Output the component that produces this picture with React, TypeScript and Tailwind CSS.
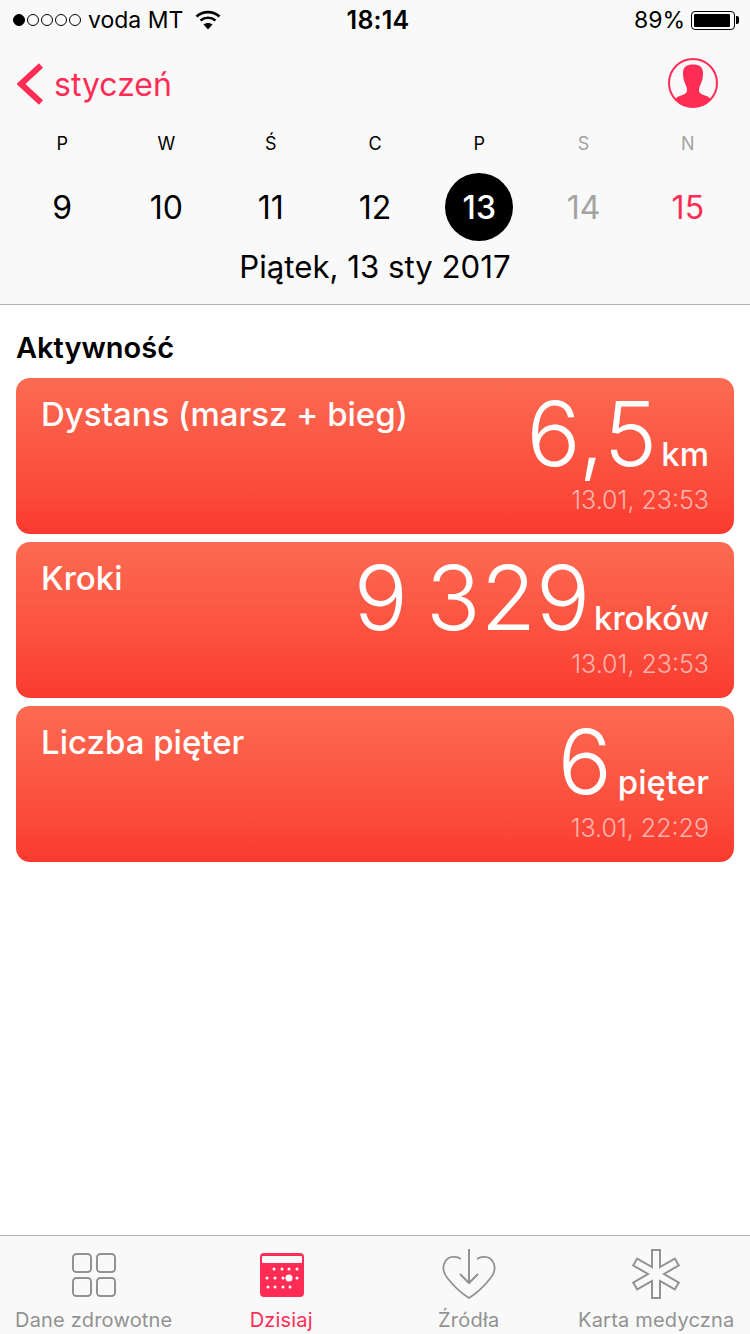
const days = [
  { label: "P", num: "9" },
  { label: "W", num: "10" },
  { label: "Ś", num: "11" },
  { label: "C", num: "12" },
  { label: "P", num: "13", active: true },
  { label: "S", num: "14", tone: "text-[#a3a3a3]", labelTone: "text-[#a3a3a3]" },
  { label: "N", num: "15", tone: "text-[#ff2d55]", labelTone: "text-[#a3a3a3]" },
]

const cards = [
  { title: "Dystans (marsz + bieg)", value: "6,5", unit: "km", time: "13.01, 23:53", valueClass: "tracking-[1px] mr-[-1px]" },
  { title: "Kroki", value: "9 329", unit: "kroków", time: "13.01, 23:53", valueClass: "[word-spacing:-7px]" },
  { title: "Liczba pięter", value: "6", unit: "pięter", time: "13.01, 22:29", valueClass: "mr-[2px]" },
]

const calendarDots = [
  { y: 16, xs: [14, 22, 29, 37] },
  { y: 25, xs: [7, 15, 23, 37] },
  { y: 34, xs: [8, 15, 23, 30] },
]

function StatusBar() {
  return (
    <div className="h-[40px] flex items-center justify-between pl-[13px] pr-[11px] text-[23px] leading-none text-black">
      <div className="flex items-center w-[304px]">
        <div className="flex gap-[2px]">
          <span className="w-[12px] h-[12px] rounded-full bg-black border border-black" />
          <span className="w-[12px] h-[12px] rounded-full border border-black" />
          <span className="w-[12px] h-[12px] rounded-full border border-black" />
          <span className="w-[12px] h-[12px] rounded-full border border-black" />
          <span className="w-[12px] h-[12px] rounded-full border border-black" />
        </div>
        <span className="ml-[7px]">voda MT</span>
        <svg className="ml-[12px]" width="26" height="20" viewBox="0 0 26 20" fill="none" stroke="#000" strokeWidth="2.6">
          <path d="M1.5 6.5C8 .7 18 .7 24.500 6.500" />
          <path d="M5.500 10.500C9.800 6.800 16.200 6.800 20.500 10.500" />
          <path d="M13 19.500L8.500 14.500C11 12.500 15 12.500 17.500 14.500Z" fill="#000" stroke="none" />
        </svg>
      </div>
      <span className="font-semibold text-[25px] tracking-[0.2px]">18:14</span>
      <div className="flex items-center justify-end w-[300px]">
        <span>89%</span>
        <div className="ml-[6px] w-[44px] h-[19px] border border-black rounded-[4px] p-[2px]">
          <div className="w-[36px] h-full bg-black rounded-[1px]" />
        </div>
        <div className="ml-[1px] w-[3px] h-[8px] bg-black rounded-r-[2px]" />
      </div>
    </div>
  )
}

function DaysHeader() {
  return (
    <div className="bg-[#f9f9f9] border-b border-[#b2b2b2] h-[305px]">
      <StatusBar />
      <div className="h-[88px] flex items-center justify-between pl-[17px] pr-[32px] pt-[2px] text-[#ff2d55]">
        <div className="flex items-center">
          <svg className="-mt-[2px]" width="26" height="42" viewBox="0 0 26 42" fill="none" stroke="#ff2d55" strokeWidth="6">
            <path d="M24 2.500L4 21L24 39.500" />
          </svg>
          <span className="ml-[11px] text-[32px] leading-none">styczeń</span>
        </div>
        <svg className="mb-[4px]" width="50" height="50" viewBox="0 0 50 50">
          <circle cx="25" cy="25" r="24" fill="none" stroke="#ff2d55" strokeWidth="2" />
          <path
            d="M25 6.500C31 6.500 35 8.500 35 15C35 19 34.500 21 33.500 24C32.500 27 31 29 31 32C31 35 33 36 37 37.500C40 38.500 41.500 39.500 42.500 41C38.500 46 32 49 25 49C18 49 11.500 46 7.500 41C8.500 39.500 10 38.500 13 37.500C17 36 19 35 19 32C19 29 17.500 27 16.500 24C15.500 21 15 19 15 15C15 8.500 19 6.500 25 6.500Z"
            fill="#ff2d55"
          />
        </svg>
      </div>
      <div className="grid grid-cols-7 px-[10px]">
        {days.map((d, i) => (
          <div key={i} className="flex flex-col items-center">
            <span className={`h-[24px] mt-[4px] text-[18px] leading-[24px] ${d.labelTone ?? "text-black"}`}>{d.label}</span>
            <div
              className={`mt-[17px] w-[68px] h-[68px] pt-[1px] flex items-center justify-center rounded-full text-[32px] leading-none ${
                d.active ? "bg-black text-white font-medium" : d.tone ?? "text-black"
              }`}
            >
              {d.num}
            </div>
          </div>
        ))}
      </div>
      <div className="mt-[6px] text-center text-[31.200px] leading-[40px] text-black">Piątek, 13 sty 2017</div>
    </div>
  )
}

function ActivityCard({
  title,
  value,
  unit,
  time,
  valueClass,
}: {
  title: string
  value: string
  unit: string
  time: string
  valueClass: string
}) {
  return (
    <div className="h-[156px] rounded-[14px] bg-gradient-to-b from-[#fc6a52] to-[#fa3a2f] pl-[25px] pr-[25px] flex justify-between text-white">
      <div className="pt-[16px] text-[33px] leading-[40px] font-medium">{title}</div>
      <div className="flex flex-col items-end">
        <div className="flex items-baseline h-[107px]">
          <span className={`text-[90px] leading-[112px] font-[275] ${valueClass}`}>{value}</span>
          <span className="ml-[4px] text-[33px] leading-none font-medium">{unit}</span>
        </div>
        <span className="text-[25px] leading-[30px] font-light text-white/60">{time}</span>
      </div>
    </div>
  )
}

function TabBar() {
  return (
    <div className="h-[99px] bg-[#f9f9f9] border-t border-[#b2b2b2] grid grid-cols-4 text-[#929292] text-[20px] leading-none">
      <div className="flex flex-col items-center">
        <svg className="mt-[16px]" width="46" height="46" viewBox="0 0 46 46" fill="none" stroke="#929292" strokeWidth="2">
          <rect x="2" y="2" width="18" height="18" rx="3.500" />
          <rect x="26" y="2" width="18" height="18" rx="3.500" />
          <rect x="2" y="26" width="18" height="18" rx="3.500" />
          <rect x="26" y="26" width="18" height="18" rx="3.500" />
        </svg>
        <span className="mt-[12px] tracking-[0.2px]">Dane zdrowotne</span>
      </div>
      <div className="flex flex-col items-center text-[#ff2d55]">
        <svg className="mt-[17px] ml-[1px]" width="44" height="44" viewBox="0 0 44 44">
          <rect width="44" height="44" rx="4" fill="#ff2d55" />
          <rect x="2" y="3" width="40" height="7" rx="1" fill="#f9f9f9" />
          {calendarDots.map((row) =>
            row.xs.map((x) => <circle key={`${x}-${row.y}`} cx={x} cy={row.y} r="1.500" fill="#fff" />),
          )}
          <circle cx="29" cy="25" r="3.500" fill="#fff" />
        </svg>
        <span className="mt-[13px] tracking-[0.2px]">Dzisiaj</span>
      </div>
      <div className="flex flex-col items-center">
        <svg className="mt-[13px]" width="54" height="52" viewBox="0 0 54 52" fill="none" stroke="#929292" strokeWidth="2">
          <path d="M19 10C15 7 7 6.500 3.500 12C0 17 1 23.500 5 28.500C10 35 19 44 27 49C35 44 44 35 49 28.500C53 23.500 54 17 50.500 12C47 6.500 39 7 35 10" strokeWidth="1.800" />
          <path d="M27 0V33" />
          <path d="M18 25L27 34L36 25" />
        </svg>
        <span className="mt-[9px] tracking-[0.2px]">Źródła</span>
      </div>
      <div className="flex flex-col items-center">
        <svg className="mt-[13px]" width="50" height="50" viewBox="0 0 50 50" fill="none" stroke="#929292" strokeWidth="2">
          <path d="M21 1H29V18.070L43.800 9.540L47.800 16.460L33 25L47.800 33.540L43.800 40.460L29 31.930V49H21V31.930L6.200 40.460L2.200 33.540L17 25L2.200 16.460L6.200 9.540L21 18.070Z" />
        </svg>
        <span className="mt-[11px] tracking-[0.2px]">Karta medyczna</span>
      </div>
    </div>
  )
}

export default function App() {
  return (
    <div className="w-[750px] h-[1334px] bg-white flex flex-col font-['Inter','Liberation_Sans',sans-serif]">
      <DaysHeader />
      <div className="flex-1 px-[16px]">
        <h2 className="pt-[25px] h-[73px] text-[29px] leading-[36px] font-semibold text-black">Aktywność</h2>
        <div className="flex flex-col gap-[8px]">
          {cards.map((c) => (
            <ActivityCard key={c.title} {...c} />
          ))}
        </div>
      </div>
      <TabBar />
    </div>
  )
}
